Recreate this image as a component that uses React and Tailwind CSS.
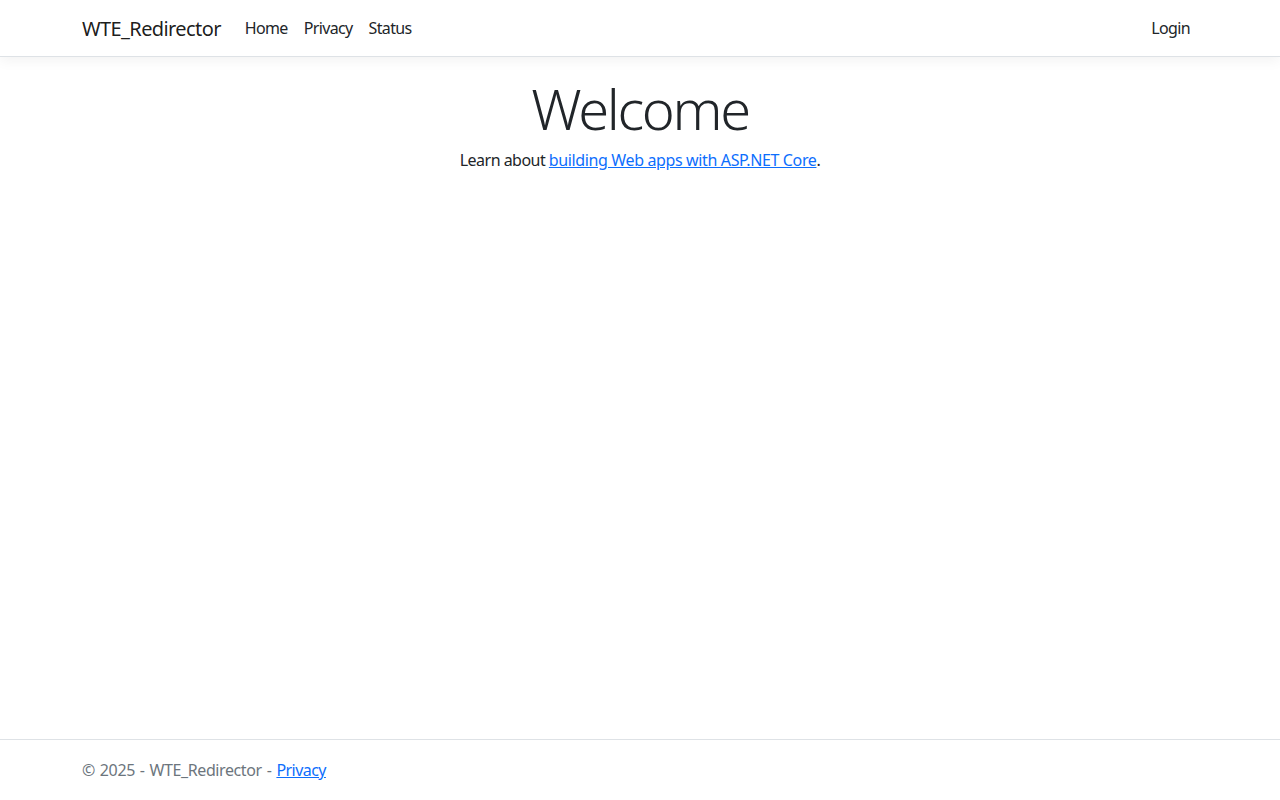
export default function App() {
  return (
    <div className="h-[800px] flex flex-col bg-white font-['Noto_Sans',sans-serif] text-[#212529] overflow-hidden">
      <header className="h-[57px] shrink-0 bg-white border-b border-[#dee2e6] shadow-[0_4px_12px_rgba(0,0,0,0.05)]">
        <nav className="w-[1140px] mx-auto px-3 h-[56px] flex items-center">
          <a className="text-[20px] text-black/90 mr-4 tracking-[-0.6px] relative top-px">WTE_Redirector</a>
          <div className="flex flex-1 items-center text-[16px] text-[#212529] tracking-[-0.65px]">
            <a className="px-2">Home</a>
            <a className="px-2">Privacy</a>
            <a className="px-2">Status</a>
            <a className="px-2 ml-auto">Login</a>
          </div>
        </nav>
      </header>
      <main className="flex-1 flex flex-col items-center pt-[18px]">
        <h1 className="text-[56px] font-light leading-[67px] tracking-[-2.35px]">Welcome</h1>
        <p className="text-[16px] leading-6 mt-[6px] tracking-[-0.52px]">
          Learn about <a className="text-[#0d6efd] underline tracking-[-0.37px]">building Web apps with ASP.NET Core</a>.
        </p>
      </main>
      <footer className="h-[61px] shrink-0 border-t border-[#dee2e6] text-[#6c757d]">
        <div className="w-[1140px] mx-auto px-3 leading-[60px] text-[16px] tracking-[-0.4px] [word-spacing:1.2px]">
          © 2025 - WTE_Redirector - <a className="text-[#0d6efd] underline tracking-[-0.55px]">Privacy</a>
        </div>
      </footer>
    </div>
  );
}
